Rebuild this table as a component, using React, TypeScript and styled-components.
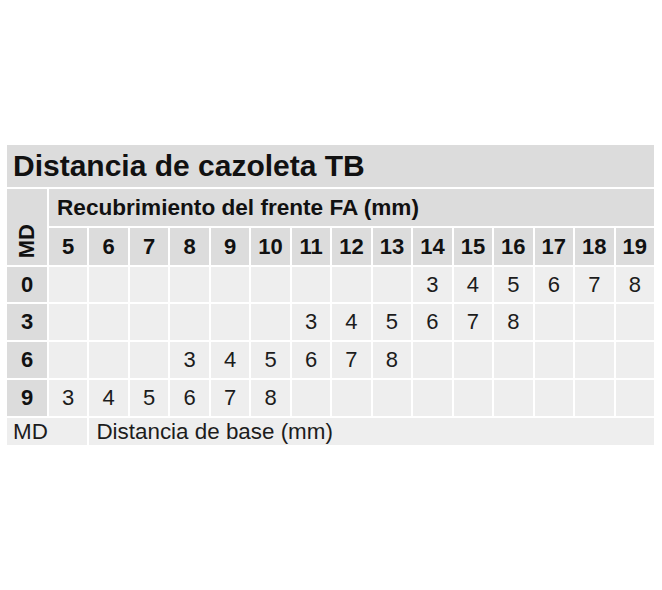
import React from "react";
import styled, { createGlobalStyle } from "styled-components";

const Global = createGlobalStyle`
  html, body { margin: 0; padding: 0; background: #fff; }
  body { font-family: "Liberation Sans", Arial, Helvetica, sans-serif; color: #111; }
`;

const Page = styled.div`
  padding: 145px 8px 0 7px;
`;

const Table = styled.div`
  width: 647px;
  display: grid;
  grid-template-columns: 40px repeat(15, 1fr);
  grid-template-rows: 42px 37px 37px 35px 36px 36px 36px 27px;
  gap: 2px;
`;

const Title = styled.div`
  grid-column: 1 / -1;
  background: #dcdcdc;
  display: flex;
  align-items: center;
  padding-left: 6px;
  font-size: 30px;
  font-weight: 700;
`;

const SubHeader = styled.div`
  grid-column: 2 / -1;
  background: #dcdcdc;
  display: flex;
  align-items: center;
  padding-left: 8px;
  font-size: 22.6px;
  font-weight: 700;
`;

const MdVertical = styled.div`
  grid-column: 1;
  grid-row: 2 / span 2;
  background: #dcdcdc;
  display: flex;
  align-items: flex-end;
  justify-content: center;
  padding-bottom: 7px;
  span {
    writing-mode: vertical-rl;
    transform: rotate(180deg);
    font-size: 22px;
    font-weight: 700;
  }
`;

const Cell = styled.div<{ $head?: boolean }>`
  background: ${(p) => (p.$head ? "#dcdcdc" : "#eeeeee")};
  display: flex;
  align-items: center;
  justify-content: center;
  font-size: 22px;
  font-weight: ${(p) => (p.$head ? 700 : 400)};
  color: ${(p) => (p.$head ? "#111" : "#1c1c1c")};
`;

const FootCell = styled.div<{ $span: string; $pad: number }>`
  grid-column: ${(p) => p.$span};
  background: #eeeeee;
  display: flex;
  align-items: center;
  padding-left: ${(p) => p.$pad}px;
  font-size: 22.4px;
  color: #1c1c1c;
`;

const cols = [5, 6, 7, 8, 9, 10, 11, 12, 13, 14, 15, 16, 17, 18, 19];
const rows: { md: number; start: number }[] = [
  { md: 0, start: 14 },
  { md: 3, start: 11 },
  { md: 6, start: 8 },
  { md: 9, start: 5 },
];

export default function App() {
  return (
    <Page>
      <Global />
      <Table>
        <Title>Distancia de cazoleta TB</Title>
        <MdVertical>
          <span>MD</span>
        </MdVertical>
        <SubHeader>Recubrimiento del frente FA (mm)</SubHeader>
        {cols.map((c) => (
          <Cell key={"h" + c} $head>
            {c}
          </Cell>
        ))}
        {rows.map((r) => (
          <React.Fragment key={r.md}>
            <Cell $head>{r.md}</Cell>
            {cols.map((c) => {
              const v = c - r.start + 3;
              return <Cell key={c}>{v >= 3 && v <= 8 ? v : ""}</Cell>;
            })}
          </React.Fragment>
        ))}
        <FootCell $span="1 / span 2" $pad={6}>MD</FootCell>
        <FootCell $span="3 / -1" $pad={7}>Distancia de base (mm)</FootCell>
      </Table>
    </Page>
  );
}
